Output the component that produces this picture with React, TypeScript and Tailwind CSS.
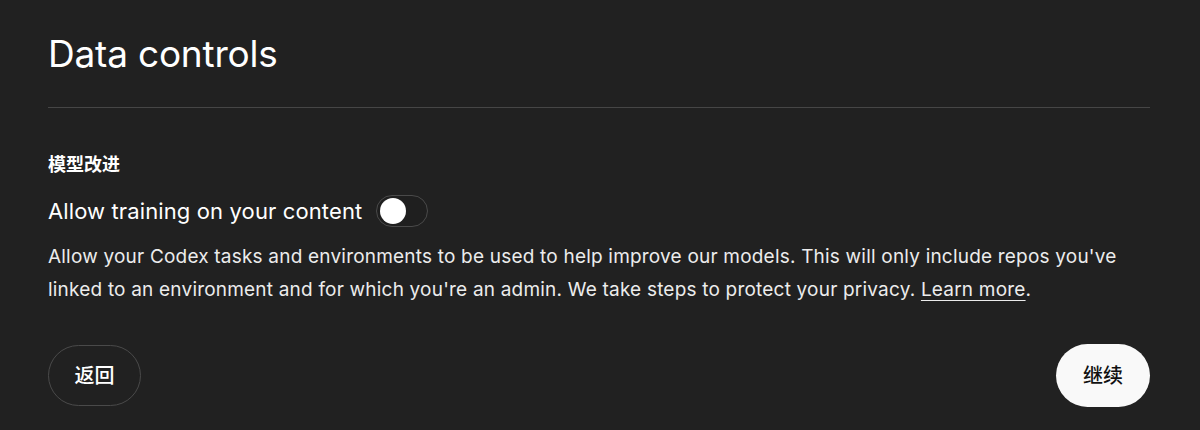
import React, { useState } from 'react';

export default function App() {
    const [allowTraining, setAllowTraining] = useState(false);

    return (
        <div
            className="min-h-[430px] w-full bg-[#212121] text-white"
            style={{ fontFamily: 'Inter, "Noto Sans CJK SC", sans-serif' }}
        >
            <div className="pl-12 pr-[50px] pt-[29px]">
                {/* Header */}
                <h1 className="text-[37px] leading-[50px] font-normal tracking-[-0.2px]">Data controls</h1>
                <div className="mt-[28px] h-px bg-[#464646]" />

                {/* Section */}
                <div className="mt-[44px]">
                    <h2 className="text-[18px] leading-[26px] font-semibold">模型改进</h2>
                    <div className="mt-[17px] flex items-center gap-[14px]">
                        <span className="text-[22px] leading-[32px] tracking-[0.12px]">Allow training on your content</span>
                        <button
                            onClick={() => setAllowTraining(!allowTraining)}
                            className={
                                allowTraining
                                    ? 'flex h-[32px] w-[52px] items-center justify-end rounded-full border border-[#4a4a4a] bg-[#2f8f5a] px-[3px]'
                                    : 'flex h-[32px] w-[52px] items-center justify-start rounded-full border border-[#4a4a4a] bg-[#1f1f1f] px-[3px]'
                            }
                        >
                            <span className="h-[26px] w-[26px] rounded-full bg-white" />
                        </button>
                    </div>
                    <p className="mt-[13px] text-[19px] leading-[33px] tracking-[0.2px] text-[#ececec]">
                        Allow your Codex tasks and environments to be used to help improve our models. This will only include repos you've
                        linked to an environment and for which you're an admin. We take steps to protect your privacy.{' '}
                        <a href="#" className="underline underline-offset-[4px]">Learn more</a>.
                    </p>
                </div>

                {/* Footer buttons */}
                <div className="mt-[38px] flex items-center justify-between">
                    <button className="h-[61px] w-[93px] rounded-full border border-[#4a4a4a] text-[20px] font-medium">
                        返回
                    </button>
                    <button className="h-[63px] w-[94px] rounded-full bg-[#f9f9f9] text-[20px] font-medium text-[#111]">
                        继续
                    </button>
                </div>
            </div>
        </div>
    );
}
